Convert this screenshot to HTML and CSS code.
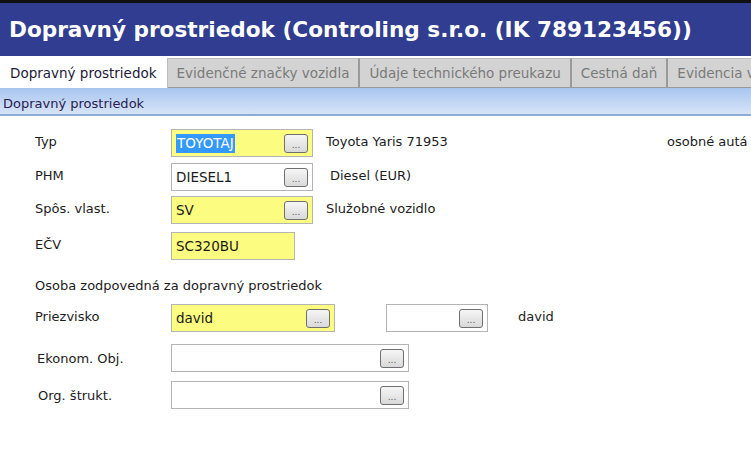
FILE: index.html
```html
<!DOCTYPE html>
<html lang="sk">
  <head>
    <meta charset="UTF-8" />
    <meta name="viewport" content="width=device-width, initial-scale=1.0" />
    <title>Dopravný prostriedok</title>
    <link rel="stylesheet" href="styles.css">
  </head>
  <body>
    <header class="titlebar">
      <h1>Dopravný prostriedok (Controling s.r.o. (IK 789123456))</h1>
    </header>

    <nav class="tabs">
      <span class="tab active">Dopravný prostriedok</span>
      <span class="tab">Evidenčné značky vozidla</span>
      <span class="tab">Údaje technického preukazu</span>
      <span class="tab">Cestná daň</span>
      <span class="tab">Evidencia vozidla</span>
    </nav>

    <div class="section-bar">Dopravný prostriedok</div>

    <form class="form">
      <div class="row row-typ">
        <label class="lbl">Typ</label>
        <div class="field yellow w-main">
          <span class="val"><span class="sel">TOYOTAJ</span></span>
          <button type="button" class="dots">...</button>
        </div>
        <span class="desc">Toyota Yaris 71953</span>
        <span class="desc far">osobné autá</span>
      </div>

      <div class="row row-phm">
        <label class="lbl">PHM</label>
        <div class="field w-main">
          <span class="val">DIESEL1</span>
          <button type="button" class="dots">...</button>
        </div>
        <span class="desc wide">Diesel (EUR)</span>
      </div>

      <div class="row row-sv">
        <label class="lbl">Spôs. vlast.</label>
        <div class="field yellow w-main">
          <span class="val">SV</span>
          <button type="button" class="dots">...</button>
        </div>
        <span class="desc">Služobné vozidlo</span>
      </div>

      <div class="row row-ecv">
        <label class="lbl">EČV</label>
        <div class="field yellow w-ecv">
          <span class="val">SC320BU</span>
        </div>
      </div>

      <p class="group-title">Osoba zodpovedná za dopravný prostriedok</p>

      <div class="row row-person">
        <label class="lbl">Priezvisko</label>
        <div class="field yellow w-name">
          <span class="val">david</span>
          <button type="button" class="dots">...</button>
        </div>
        <div class="field w-small">
          <span class="val"></span>
          <button type="button" class="dots">...</button>
        </div>
        <span class="desc person">david</span>
      </div>

      <div class="row row-ekon">
        <label class="lbl shift">Ekonom. Obj.</label>
        <div class="field w-long">
          <span class="val"></span>
          <button type="button" class="dots">...</button>
        </div>
      </div>

      <div class="row row-org">
        <label class="lbl shift2">Org. štrukt.</label>
        <div class="field w-long">
          <span class="val"></span>
          <button type="button" class="dots">...</button>
        </div>
      </div>
    </form>
  </body>
</html>
```

FILE: styles.css
```css
body {
  font-family: "DejaVu Sans", Verdana, sans-serif;
  font-size: 13px;
  margin: 0;
  padding: 0;
  background-color: white;
  color: #1c1c1c;
  overflow: hidden;
}

.titlebar {
  background-color: #303d90;
  border-top: 3px solid #111;
  height: 53px;
  display: flex;
  align-items: center;
  padding: 0 9px;
  border-bottom: 2px solid white;
}

.titlebar h1 {
  margin: 0;
  color: white;
  font-size: 21.6px;
  font-weight: bold;
  white-space: nowrap;
}

.tabs {
  display: flex;
  height: 30px;
  white-space: nowrap;
  overflow: hidden;
}

.tab {
  display: flex;
  align-items: center;
  padding: 0 9px;
  font-size: 13.5px;
  background-color: #d3d3d3;
  color: #7a7a7a;
  border-right: 2px solid #9a9a9a;
  border-top: 1px solid #bdbdbd;
  border-bottom: 1px solid #9a9a9a;
}

.tab.active {
  background-color: white;
  color: #1e1a3a;
  padding: 0 10px;
  border-top: none;
  border-bottom: none;
  border-right: 1px solid #bdbdbd;
}

.section-bar {
  box-sizing: border-box;
  height: 28px;
  padding: 4px 0 0 3px;
  line-height: 24px;
  color: #2a2050;
  background: linear-gradient(#a9c5ef, #d6e4f8);
  border-bottom: 2px solid #8fa9d3;
}

.form {
  display: flex;
  flex-direction: column;
  padding: 13px 0 0 35px;
}

.row {
  display: flex;
  align-items: center;
  height: 28px;
}

.row-phm { margin-top: 6px; }
.row-sv { margin-top: 5px; }
.row-ecv { margin-top: 8px; }
.row-person { margin-top: 12px; }
.row-ekon { margin-top: 12px; }
.row-org { margin-top: 9px; }

.lbl {
  width: 136px;
  flex-shrink: 0;
  margin-top: -3px;
}

.lbl.shift {
  width: 134px;
  padding-left: 2px;
  margin-top: 0;
}

.lbl.shift2 {
  width: 133px;
  padding-left: 3px;
  margin-top: 0;
}

.group-title {
  margin: 18px 0 0;
  height: 14px;
}

.field {
  box-sizing: border-box;
  height: 28px;
  display: flex;
  align-items: center;
  border: 1px solid #b4b4b4;
  background-color: white;
  padding: 0 4px 0 4px;
}

.field.yellow {
  background-color: #fcfc80;
}

.w-main { width: 142px; }
.w-ecv { width: 124px; }
.w-name { width: 164px; }
.w-small { width: 102px; margin-left: 51px; }
.w-long { width: 238px; }

.val {
  flex: 1;
  font-size: 13.5px;
  color: #1a1a1a;
}

.sel {
  background-color: #3399ff;
  color: white;
  padding: 1px 1px 2px;
}

.dots {
  box-sizing: border-box;
  width: 24px;
  height: 19px;
  padding: 0 0 2px;
  border: 1px solid #6f6f6f;
  border-radius: 3px;
  background: linear-gradient(#f6f6f6, #d9d9d9);
  color: #555;
  font-family: "DejaVu Sans", Verdana, sans-serif;
  font-size: 9px;
  line-height: 9px;
  display: flex;
  align-items: flex-end;
  justify-content: center;
}

.desc {
  margin-left: 13px;
  margin-top: -3px;
}

.desc.wide {
  margin-left: 17px;
}

.desc.far {
  margin-left: auto;
  width: 84px;
  white-space: nowrap;
}

.desc.person {
  margin-left: 30px;
}
```
